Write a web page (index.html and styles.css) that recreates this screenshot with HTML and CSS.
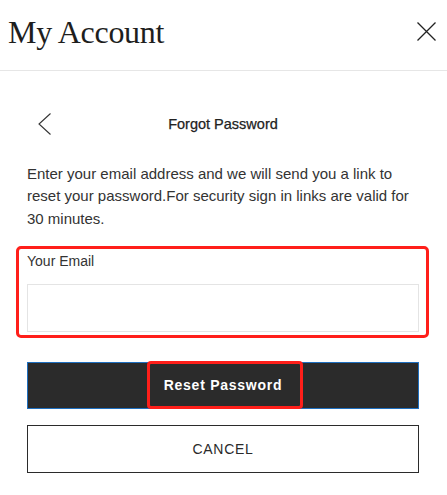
FILE: index.html
```html
<!DOCTYPE html>
<html lang="en">
<head>
<meta charset="utf-8">
<title>My Account</title>
<link rel="stylesheet" href="styles.css">
</head>
<body>
<div class="panel">
  <header class="header">
    <h1 class="title">My Account</h1>
    <button class="close" aria-label="Close">
      <svg width="19" height="19" viewBox="0 0 19 19"><path d="M0.5 0.5 L18.5 18.5 M18.5 0.5 L0.5 18.5" stroke="#222" stroke-width="1.3" fill="none"/></svg>
    </button>
  </header>
  <main class="content">
    <div class="nav-row">
      <button class="back" aria-label="Back">
        <svg width="13" height="22" viewBox="0 0 13 22"><polyline points="12.5,0.5 1,11 12.5,21.5" stroke="#333" stroke-width="1.1" fill="none"/></svg>
      </button>
      <h2 class="nav-title">Forgot Password</h2>
      <span></span>
    </div>
    <p class="intro">Enter your email address and we will send you a link to reset your password.For security sign in links are valid for 30 minutes.</p>
    <div class="field marked">
      <label class="label" for="email">Your Email</label>
      <input class="input" id="email" type="email">
    </div>
    <button class="btn btn-primary"><span class="btn-text marked">Reset Password</span></button>
    <button class="btn btn-secondary">CANCEL</button>
  </main>
</div>
</body>
</html>
```

FILE: styles.css
```css
* { box-sizing: border-box; }
body {
  margin: 0;
  background: #fff;
  font-family: "Liberation Sans", Arial, sans-serif;
  color: #2a2a2a;
}
.panel { width: 447px; }
.header {
  height: 71px;
  display: flex;
  justify-content: space-between;
  align-items: flex-start;
  padding: 14px 11px 0 8px;
  border-bottom: 1px solid #e6e6e6;
}
.title {
  margin: 0;
  font-family: "Liberation Serif", "Times New Roman", serif;
  font-weight: normal;
  font-size: 32px;
  line-height: 36px;
  letter-spacing: -0.3px;
  color: #1e1e1e;
}
.close {
  margin-top: 8px;
  padding: 0;
  border: 0;
  background: none;
  display: flex;
}
.content {
  padding: 42px 28px 0 27px;
}
.nav-row {
  display: grid;
  grid-template-columns: 1fr auto 1fr;
  align-items: center;
  height: 22px;
}
.back {
  justify-self: start;
  margin-left: 11px;
  padding: 0;
  border: 0;
  background: none;
  display: flex;
}
.nav-title {
  margin: 0;
  font-size: 14.5px;
  font-weight: normal;
  line-height: 22px;
  color: #222;
  -webkit-text-stroke: 0.25px #222;
}
.intro {
  margin: 28px 0 0;
  font-size: 15px;
  line-height: 22.3px;
  color: #333;
}
.marked { position: relative; }
.marked::after {
  content: "";
  position: absolute;
  border: 3px solid #ff1f1a;
  border-radius: 5px;
  pointer-events: none;
}
.field {
  margin-top: 20px;
  display: flex;
  flex-direction: column;
}
.field::after { top: -4px; bottom: -6px; left: -11px; right: -10px; }
.label {
  font-size: 14px;
  line-height: 22px;
  color: #333;
}
.input {
  margin-top: 12px;
  height: 48px;
  border: 1px solid #e4e4e4;
  border-radius: 0;
  outline: none;
  font: inherit;
  padding: 0 12px;
}
.btn {
  display: flex;
  justify-content: center;
  align-items: center;
  width: 100%;
  padding: 0;
  font-family: "Liberation Sans", Arial, sans-serif;
  font-size: 14px;
  cursor: pointer;
}
.btn-primary {
  margin-top: 30px;
  height: 47px;
  background: #2b2b2b;
  border: 1px solid #1f6fbf;
  color: #fff;
}
.btn-text {
  font-weight: bold;
  letter-spacing: 0.75px;
  line-height: 47px;
}
.btn-text::after { top: -1px; bottom: 0; left: -17px; right: -21px; border-radius: 4px; }
.btn-secondary {
  margin-top: 16px;
  height: 48px;
  background: #fff;
  border: 1px solid #2b2b2b;
  color: #2a2a2a;
  letter-spacing: 0.7px;
}
```
